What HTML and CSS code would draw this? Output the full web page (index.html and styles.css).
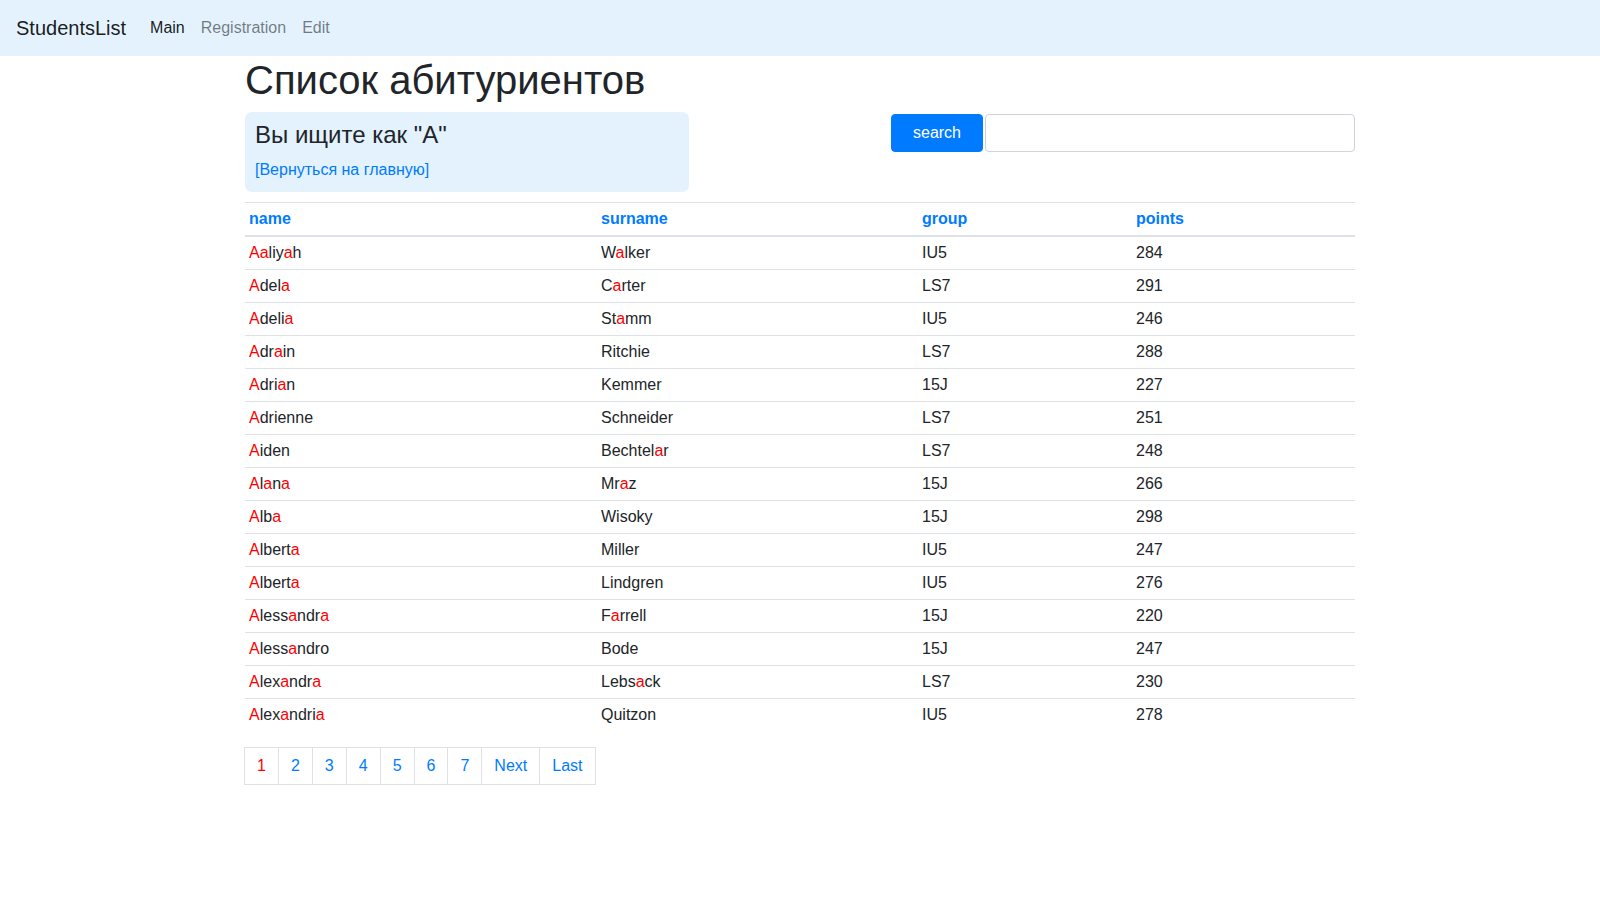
FILE: index.html
```html
<!DOCTYPE html>
<html lang="ru">
<head>
<meta charset="utf-8">
<title>StudentsList</title>
<link rel="stylesheet" href="styles.css">
</head>
<body>
<nav class="navbar">
  <a class="brand" href="#">StudentsList</a>
  <ul class="nav">
    <li><a class="nav-link active" href="#">Main</a></li>
    <li><a class="nav-link" href="#">Registration</a></li>
    <li><a class="nav-link" href="#">Edit</a></li>
  </ul>
</nav>
<main class="container">
  <h1 class="title">Список абитуриентов</h1>
  <div class="toolbar">
    <div class="search-info">
      <h4 class="search-title">Вы ищите как "А"</h4>
      <a class="back-link" href="#">[Вернуться на главную]</a>
    </div>
    <form class="search-form">
      <button type="button" class="btn-primary">search</button>
      <input type="text" class="form-control">
    </form>
  </div>
  <table class="table">
    <thead>
      <tr>
        <th class="c-name"><a href="#">name</a></th>
        <th class="c-surname"><a href="#">surname</a></th>
        <th class="c-group"><a href="#">group</a></th>
        <th class="c-points"><a href="#">points</a></th>
      </tr>
    </thead>
    <tbody>
      <tr><td><span class="hl">A</span><span class="hl">a</span>liy<span class="hl">a</span>h</td><td>W<span class="hl">a</span>lker</td><td>IU5</td><td>284</td></tr>
      <tr><td><span class="hl">A</span>del<span class="hl">a</span></td><td>C<span class="hl">a</span>rter</td><td>LS7</td><td>291</td></tr>
      <tr><td><span class="hl">A</span>deli<span class="hl">a</span></td><td>St<span class="hl">a</span>mm</td><td>IU5</td><td>246</td></tr>
      <tr><td><span class="hl">A</span>dr<span class="hl">a</span>in</td><td>Ritchie</td><td>LS7</td><td>288</td></tr>
      <tr><td><span class="hl">A</span>dri<span class="hl">a</span>n</td><td>Kemmer</td><td>15J</td><td>227</td></tr>
      <tr><td><span class="hl">A</span>drienne</td><td>Schneider</td><td>LS7</td><td>251</td></tr>
      <tr><td><span class="hl">A</span>iden</td><td>Bechtel<span class="hl">a</span>r</td><td>LS7</td><td>248</td></tr>
      <tr><td><span class="hl">A</span>l<span class="hl">a</span>n<span class="hl">a</span></td><td>Mr<span class="hl">a</span>z</td><td>15J</td><td>266</td></tr>
      <tr><td><span class="hl">A</span>lb<span class="hl">a</span></td><td>Wisoky</td><td>15J</td><td>298</td></tr>
      <tr><td><span class="hl">A</span>lbert<span class="hl">a</span></td><td>Miller</td><td>IU5</td><td>247</td></tr>
      <tr><td><span class="hl">A</span>lbert<span class="hl">a</span></td><td>Lindgren</td><td>IU5</td><td>276</td></tr>
      <tr><td><span class="hl">A</span>less<span class="hl">a</span>ndr<span class="hl">a</span></td><td>F<span class="hl">a</span>rrell</td><td>15J</td><td>220</td></tr>
      <tr><td><span class="hl">A</span>less<span class="hl">a</span>ndro</td><td>Bode</td><td>15J</td><td>247</td></tr>
      <tr><td><span class="hl">A</span>lex<span class="hl">a</span>ndr<span class="hl">a</span></td><td>Lebs<span class="hl">a</span>ck</td><td>LS7</td><td>230</td></tr>
      <tr><td><span class="hl">A</span>lex<span class="hl">a</span>ndri<span class="hl">a</span></td><td>Quitzon</td><td>IU5</td><td>278</td></tr>
    </tbody>
  </table>
  <ul class="pagination">
    <li><a class="page-link current" href="#">1</a></li>
    <li><a class="page-link" href="#">2</a></li>
    <li><a class="page-link" href="#">3</a></li>
    <li><a class="page-link" href="#">4</a></li>
    <li><a class="page-link" href="#">5</a></li>
    <li><a class="page-link" href="#">6</a></li>
    <li><a class="page-link" href="#">7</a></li>
    <li><a class="page-link" href="#">Next</a></li>
    <li><a class="page-link" href="#">Last</a></li>
  </ul>
</main>
</body>
</html>
```
FILE: styles.css
```css
* { box-sizing: border-box; }
html, body {
  margin: 0;
  padding: 0;
  background: #fff;
  color: #212529;
  font-family: "Liberation Sans", Arial, sans-serif;
  font-size: 16px;
  line-height: 1.5;
}
a { text-decoration: none; color: #007bff; }

.navbar {
  display: flex;
  align-items: center;
  background: #e3f2fd;
  padding: 8px 16px;
  height: 56px;
}
.brand {
  font-size: 20px;
  line-height: 30px;
  padding: 5px 0;
  margin-right: 16px;
  color: rgba(0,0,0,.9);
}
.nav {
  display: flex;
  list-style: none;
  margin: 0;
  padding: 0;
}
.nav-link {
  display: block;
  padding: 8px;
  color: rgba(0,0,0,.5);
}
.nav-link.active { color: rgba(0,0,0,.9); }

.container {
  width: 1140px;
  margin: 0 auto;
  padding: 0 15px;
}
.title {
  font-size: 40px;
  font-weight: 500;
  line-height: 1.2;
  margin: 0 0 8px;
}
.toolbar {
  display: flex;
  align-items: flex-start;
  margin-bottom: 10px;
}
.search-info {
  width: 444px;
  background: #e3f2fd;
  border-radius: 7px;
  padding: 9px 10px 10px;
}
.search-title {
  font-size: 24px;
  font-weight: 500;
  line-height: 1.2;
  margin: 0 0 8px;
}
.back-link { display: inline-block; }

.search-form {
  margin-left: auto;
  display: flex;
  gap: 2px;
  margin-top: 2px;
}
.btn-primary {
  width: 92px;
  height: 38px;
  background: #007bff;
  border: 1px solid #007bff;
  color: #fff;
  border-radius: 4px;
  font: inherit;
  font-size: 16px;
  padding: 0;
}
.form-control {
  width: 370px;
  height: 38px;
  border: 1px solid #ced4da;
  border-radius: 4px;
  font: inherit;
  padding: 6px 12px;
}

.table {
  width: 1110px;
  border-collapse: collapse;
  margin-bottom: 16px;
}
.table th, .table td {
  padding: 4px;
  text-align: left;
  border-top: 1px solid #dee2e6;
  vertical-align: top;
}
.table th {
  border-bottom: 2px solid #dee2e6;
  font-weight: 700;
}
.c-name { width: 352px; }
.c-surname { width: 321px; }
.c-group { width: 214px; }
.c-points { width: 223px; }
.hl { color: #ff0000; }

.pagination {
  display: flex;
  list-style: none;
  margin: 0 0 0 -1px;
  padding: 0;
}
.pagination li + li .page-link { margin-left: -1px; }
.page-link {
  display: block;
  padding: 8px 12px;
  line-height: 20px;
  border: 1px solid #dee2e6;
  background: #fff;
  color: #007bff;
}
.page-link.current { color: #ff0000; }
```
